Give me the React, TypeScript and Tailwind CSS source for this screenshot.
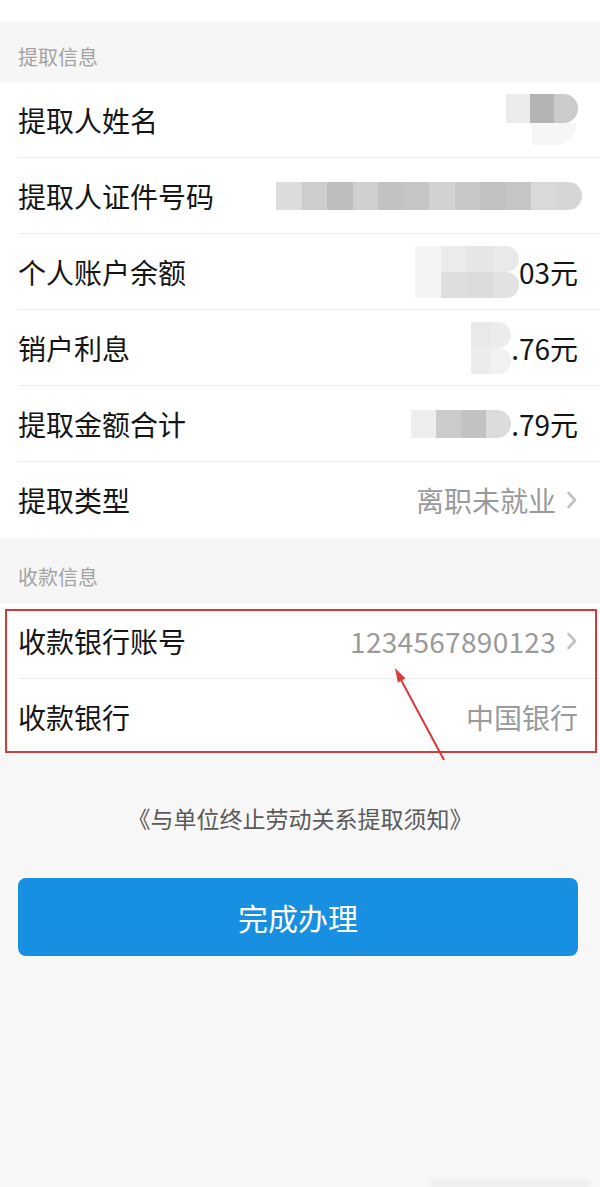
import type { ReactNode } from 'react';

const font = { fontFamily: '"Noto Sans CJK SC", "Noto Sans", sans-serif' };

const Chevron = () => (
  <svg width="12" height="20" viewBox="0 0 12 20" className="ml-[10px] shrink-0">
    <path d="M2.5 3 L9 10 L2.5 17" fill="none" stroke="#c2c2c2" strokeWidth="2.6" strokeLinecap="round" strokeLinejoin="round" />
  </svg>
);

const SectionHeader = ({ title, className }: { title: string; className?: string }) => (
  <div className={`flex items-end px-[18px] bg-[#f6f6f6] text-[20px] leading-[28px] text-[#a3a3a3] ${className ?? ''}`}>
    {title}
  </div>
);

const Row = ({ label, children, last }: { label: string; children?: ReactNode; last?: boolean }) => (
  <div className="pl-[18px] bg-white">
    <div className={`flex h-[76px] items-center justify-between pr-[22px] ${last ? '' : 'border-b border-[#ececec]'}`}>
      <span className="text-[28px] leading-none text-[#151515]">{label}</span>
      <div className="flex items-center">{children}</div>
    </div>
  </div>
);

// mosaic blocks standing in for the blurred numbers
const Mosaic = ({ shades, w = 25, h = 29, round }: { shades: string[]; w?: number; h?: number; round?: boolean }) => (
  <div className="flex overflow-hidden blur-[0.6px]" style={{ height: h, borderTopRightRadius: round ? h / 2 : 0, borderBottomRightRadius: round ? h / 2 : 0 }}>
    {shades.map((c, i) => (
      <div key={i} style={{ width: w, background: c }} />
    ))}
  </div>
);

export default function App() {
  return (
    <div style={font} className="relative min-h-[1187px] w-[600px] bg-[#f7f7f7]">
      <div className="h-[22px] bg-white" />
      <SectionHeader title="提取信息" className="h-[60px] pb-[11px]" />

      <Row label="提取人姓名">
        <div className="flex flex-col">
          <Mosaic shades={['#ececec', '#b3b3b3', '#cbcbcb']} w={24} h={29} round />
          <div className="ml-[26px] h-[22px] w-[44px] rounded-br-[20px] bg-[#f6f6f6]" />
        </div>
      </Row>
      <Row label="提取人证件号码">
        <div className="-mr-[4px]">
          <Mosaic
            shades={['#dcdcdc', '#cdcdcd', '#bdbdbd', '#cfcfcf', '#c2c2c2', '#c6c6c6', '#d2d2d2', '#c8c8c8', '#c1c1c1', '#c5c5c5', '#d9d9d9', '#d6d6d6']}
            w={25.5}
            h={28}
            round
          />
        </div>
      </Row>
      <Row label="个人账户余额">
        <div className="flex flex-col">
          <Mosaic shades={['#f4f4f4', '#ebebeb', '#e6e6e6', '#e9e9e9']} w={26} h={26} round />
          <Mosaic shades={['#f4f4f4', '#dedede', '#dbdbdb', '#e2e2e2']} w={26} h={26} round />
        </div>
        <span className="text-[28px] leading-none text-[#151515]">03元</span>
      </Row>
      <Row label="销户利息">
        <div className="flex flex-col">
          <Mosaic shades={['#e9e9e9', '#ececec']} w={20} h={26} round />
          <Mosaic shades={['#ececec', '#f1f1f1']} w={20} h={26} round />
        </div>
        <span className="text-[28px] leading-none text-[#151515]">.76元</span>
      </Row>
      <Row label="提取金额合计">
        <Mosaic shades={['#eeeeee', '#cbcbcb', '#c2c2c2', '#dcdcdc']} w={25} h={28} round />
        <span className="text-[28px] leading-none text-[#151515]">.79元</span>
      </Row>
      <Row label="提取类型" last>
        <span className="text-[28px] leading-none text-[#9a9a9a]">离职未就业</span>
        <Chevron />
      </Row>

      <SectionHeader title="收款信息" className="h-[65px] pb-[12px]" />

      <div className="relative">
        <Row label="收款银行账号">
          <span className="text-[28px] leading-none tracking-[0.3px] text-[#9a9a9a]">1234567890123</span>
          <Chevron />
        </Row>
        <Row label="收款银行" last>
          <span className="text-[28px] leading-none text-[#9a9a9a]">中国银行</span>
        </Row>
        <div className="pointer-events-none absolute top-[6px] bottom-[2px] left-[5px] right-[3px] border-2 border-[#d8393a]" />
      </div>

      <div className="flex justify-center pt-[48px] text-[23px] leading-[30px] text-[#5a5a5a]">
        《与单位终止劳动关系提取须知》
      </div>

      <div className="pl-[18px] pr-[22px] pt-[45px]">
        <button className="flex h-[78px] w-full items-center justify-center rounded-[8px] bg-[#1890e1] text-[30px] text-white">
          完成办理
        </button>
      </div>

      {/* annotation arrow */}
      <svg className="pointer-events-none absolute left-[385px] top-[660px]" width="70" height="105" viewBox="0 0 70 105">
        <line x1="59" y1="100" x2="15" y2="18" stroke="#d8393a" strokeWidth="2" />
        <polygon points="10,8 20.5,18.4 12.8,22.4" fill="#d8393a" />
      </svg>

      {/* home indicator shadow */}
      <div className="absolute bottom-0 left-[430px] h-[6px] w-[160px] rounded-t-[4px] bg-[#ececec] blur-[2px]" />
    </div>
  );
}
